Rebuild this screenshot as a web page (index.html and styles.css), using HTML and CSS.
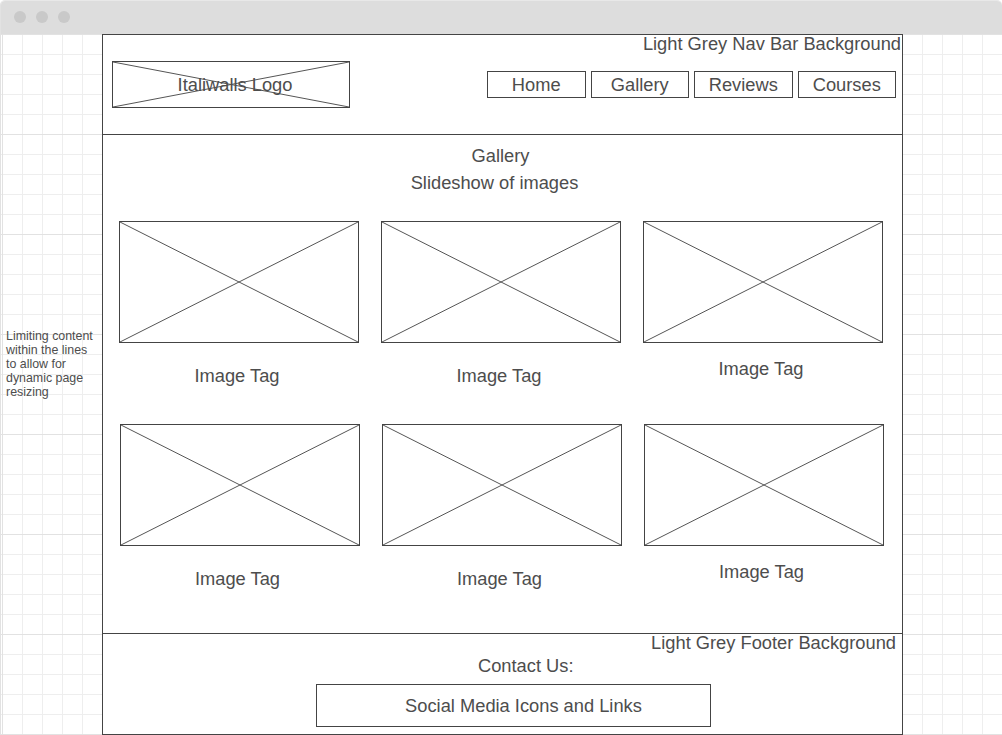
FILE: index.html
```html
<!DOCTYPE html>
<html lang="en">
<head>
<meta charset="utf-8">
<title>Italiwalls Gallery Wireframe</title>
<link rel="stylesheet" href="styles.css">
</head>
<body>
<div class="window">
  <div class="titlebar">
    <span class="dot"></span><span class="dot"></span><span class="dot"></span>
  </div>
  <div class="canvas">
    <div class="note-col">
      <p class="note">Limiting content within the lines to allow for dynamic page resizing</p>
    </div>
    <div class="frame">
      <header class="header">
        <span class="annot annot-nav">Light Grey Nav Bar Background</span>
        <div class="logo">
          <svg class="cross" viewBox="0 0 100 100" preserveAspectRatio="none"><line x1="0" y1="0" x2="100" y2="100"/><line x1="0" y1="100" x2="100" y2="0"/></svg>
          <span class="logo-text">Italiwalls Logo</span>
        </div>
        <nav class="nav">
          <a class="nav-btn">Home</a>
          <a class="nav-btn">Gallery</a>
          <a class="nav-btn">Reviews</a>
          <a class="nav-btn">Courses</a>
        </nav>
      </header>
      <main class="gallery">
        <h1 class="g-title">Gallery</h1>
        <p class="g-sub">Slideshow of images</p>
        <div class="grid">
          <div class="card"><div class="img"><svg class="cross" viewBox="0 0 100 100" preserveAspectRatio="none"><line x1="0" y1="0" x2="100" y2="100"/><line x1="0" y1="100" x2="100" y2="0"/></svg></div><span class="tag">Image Tag</span></div>
          <div class="card"><div class="img"><svg class="cross" viewBox="0 0 100 100" preserveAspectRatio="none"><line x1="0" y1="0" x2="100" y2="100"/><line x1="0" y1="100" x2="100" y2="0"/></svg></div><span class="tag">Image Tag</span></div>
          <div class="card"><div class="img"><svg class="cross" viewBox="0 0 100 100" preserveAspectRatio="none"><line x1="0" y1="0" x2="100" y2="100"/><line x1="0" y1="100" x2="100" y2="0"/></svg></div><span class="tag tag-high">Image Tag</span></div>
          <div class="card row2"><div class="img"><svg class="cross" viewBox="0 0 100 100" preserveAspectRatio="none"><line x1="0" y1="0" x2="100" y2="100"/><line x1="0" y1="100" x2="100" y2="0"/></svg></div><span class="tag">Image Tag</span></div>
          <div class="card row2"><div class="img"><svg class="cross" viewBox="0 0 100 100" preserveAspectRatio="none"><line x1="0" y1="0" x2="100" y2="100"/><line x1="0" y1="100" x2="100" y2="0"/></svg></div><span class="tag">Image Tag</span></div>
          <div class="card row2"><div class="img"><svg class="cross" viewBox="0 0 100 100" preserveAspectRatio="none"><line x1="0" y1="0" x2="100" y2="100"/><line x1="0" y1="100" x2="100" y2="0"/></svg></div><span class="tag tag-high">Image Tag</span></div>
        </div>
      </main>
      <footer class="footer">
        <span class="annot annot-foot">Light Grey Footer Background</span>
        <p class="contact">Contact Us:</p>
        <div class="social">Social Media Icons and Links</div>
      </footer>
    </div>
  </div>
</div>
</body>
</html>
```
FILE: styles.css
```css
* { box-sizing: border-box; }
html, body { margin: 0; padding: 0; background: #ffffff; }
body {
  font-family: "Liberation Sans", Arial, sans-serif;
  color: #4d4d4d;
  width: 1002px;
  height: 735px;
  overflow: hidden;
}
.window {
  width: 1002px;
  height: 735px;
  border-left: 1px solid #e2e2e2;
  border-top: 1px solid #e8e8e8;
  border-radius: 5px 5px 0 0;
  overflow: hidden;
  display: flex;
  flex-direction: column;
}
.titlebar {
  height: 33px;
  flex: 0 0 33px;
  background: #dddddd;
  display: flex;
  align-items: center;
  gap: 10px;
  padding-left: 13px;
  padding-bottom: 1px;
}
.dot {
  width: 12px;
  height: 12px;
  border-radius: 50%;
  background: #c9c9c9;
}
.canvas {
  flex: 1;
  display: flex;
  align-items: flex-start;
  background-color: #ffffff;
  background-image:
    linear-gradient(to right, #e2e2e2 1px, transparent 1px),
    linear-gradient(to bottom, #e2e2e2 1px, transparent 1px),
    linear-gradient(to right, #eeeeee 1px, transparent 1px),
    linear-gradient(to bottom, #eeeeee 1px, transparent 1px);
  background-size: 100px 100px, 100px 100px, 20px 20px, 20px 20px;
  background-position: 1px 0, 0 0, 1px 0, 0 0;
}
.note-col {
  width: 101px;
  flex: 0 0 101px;
  padding: 295px 0 0 5px;
}
.note {
  margin: 0;
  width: 94px;
  font-size: 12.4px;
  line-height: 14px;
}
.frame {
  width: 801px;
  height: 701px;
  flex: 0 0 801px;
  border: 1px solid #444444;
  background: #ffffff;
  display: flex;
  flex-direction: column;
}
.annot {
  position: absolute;
  font-size: 18.3px;
  line-height: 20px;
  white-space: nowrap;
}
.header {
  position: relative;
  height: 100px;
  flex: 0 0 100px;
  border-bottom: 1px solid #444444;
  display: flex;
  align-items: center;
  padding: 0 6px 0 9px;
}
.annot-nav { top: -1px; right: 1px; }
.logo {
  position: relative;
  width: 238px;
  height: 47px;
  border: 1px solid #444444;
  display: flex;
  align-items: center;
  justify-content: center;
}
.cross {
  position: absolute;
  inset: 0;
  width: 100%;
  height: 100%;
}
.cross line {
  stroke: #555555;
  stroke-width: 1;
  vector-effect: non-scaling-stroke;
}
.logo-text {
  position: relative;
  font-size: 18.3px;
  line-height: 20px;
  margin-left: 8px;
}
.nav {
  margin-left: auto;
  display: flex;
  gap: 5px;
}
.nav-btn {
  width: 98.5px;
  height: 27px;
  border: 1px solid #444444;
  display: flex;
  align-items: center;
  justify-content: center;
  font-size: 18.3px;
  line-height: 20px;
}
.gallery {
  height: 499px;
  flex: 0 0 499px;
  border-bottom: 1px solid #444444;
  display: flex;
  flex-direction: column;
  align-items: center;
  padding-top: 11px;
}
.g-title, .g-sub {
  margin: 0;
  font-weight: normal;
  font-size: 18.3px;
  line-height: 20px;
}
.g-sub { margin-top: 7px; margin-right: 16px; }
.g-title { margin-right: 4px; }
.grid {
  align-self: flex-start;
  margin: 28px 0 0 16px;
  display: grid;
  grid-template-columns: repeat(3, 240px);
  column-gap: 22px;
  row-gap: 38px;
}
.card {
  display: flex;
  flex-direction: column;
  align-items: center;
}
.card.row2 { margin-left: 1px; }
.img {
  position: relative;
  width: 240px;
  height: 122px;
  border: 1px solid #444444;
}
.tag {
  margin-top: 23px;
  margin-right: 4px;
  font-size: 18.3px;
  line-height: 20px;
}
.tag-high { margin-top: 16px; }
.footer {
  position: relative;
  flex: 1;
  display: flex;
  flex-direction: column;
  align-items: flex-start;
  padding: 22px 0 0 213px;
}
.annot-foot { top: -1px; right: 6px; }
.contact {
  margin: 0 0 0 162px;
  font-size: 18.3px;
  line-height: 20px;
}
.social {
  margin-top: 8px;
  width: 395px;
  height: 43px;
  border: 1px solid #444444;
  display: flex;
  align-items: center;
  justify-content: center;
  padding-left: 20px;
  font-size: 18.3px;
  line-height: 20px;
}
```
